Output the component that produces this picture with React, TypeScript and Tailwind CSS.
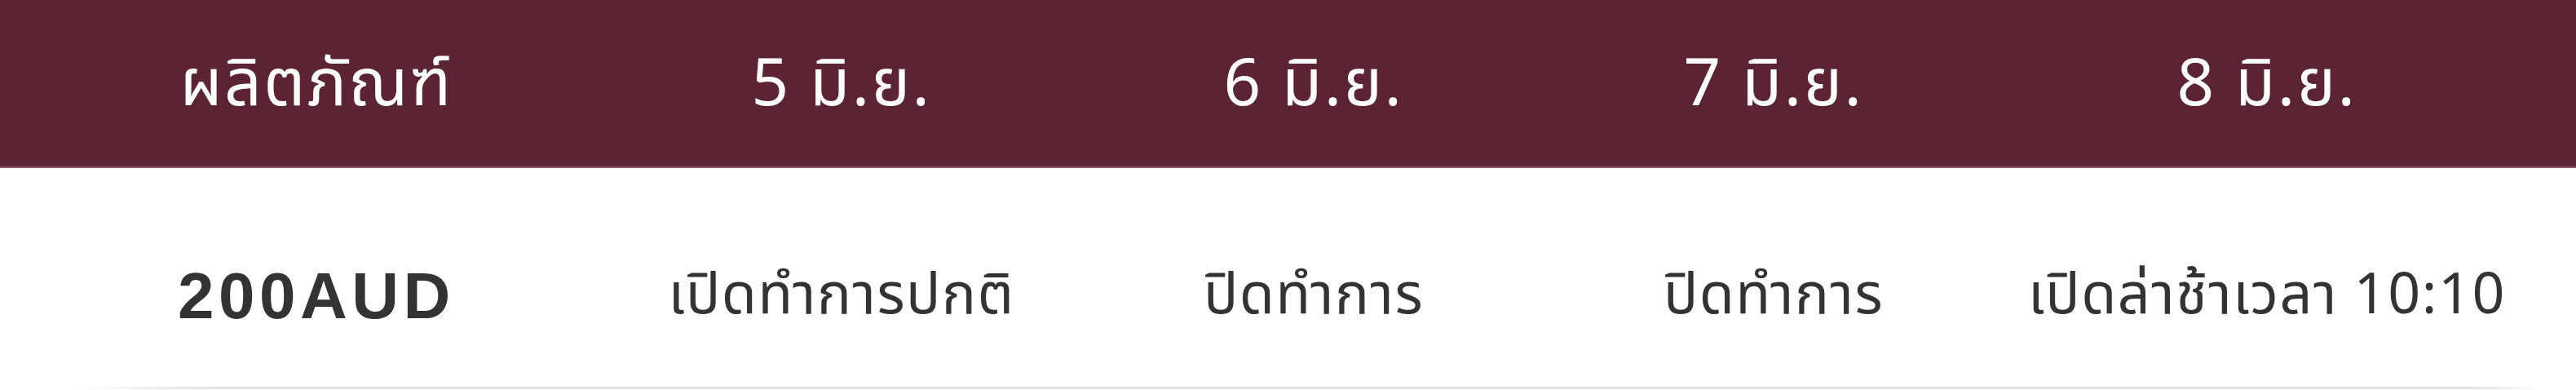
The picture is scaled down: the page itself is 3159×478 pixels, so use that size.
const days = ["5 มิ.ย.", "6 มิ.ย.", "7 มิ.ย.", "8 มิ.ย."];
const statuses = ["เปิดทำการปกติ", "ปิดทำการ", "ปิดทำการ", "เปิดล่าช้าเวลา 10:10"];

const cols = "grid grid-cols-[776px_512px_646px_482px_728px]";

export default function App() {
  return (
    <div className="w-[3159px] bg-white font-['Noto_Sans_Thai','Noto_Sans',sans-serif] font-stretch-condensed">
      <div className={`${cols} h-[206px] bg-[#5c2333] border-b-2 border-[#8a5868] text-white text-[80px] tracking-[2.5px] pt-[6px]`}>
        <div className="flex items-center justify-center">ผลิตภัณฑ์</div>
        {days.map((d, i) => (
          <div key={i} className="flex items-center justify-center">
            {d}
          </div>
        ))}
      </div>
      <div className={`${cols} h-[268px] text-[#333333] text-[70px] tracking-[1.5px] pt-[46px]`}>
        <div className="flex items-center justify-center font-['Liberation_Sans',sans-serif] font-bold text-[80px] tracking-[5.5px]">
          200AUD
        </div>
        {statuses.map((s, i) => (
          <div key={i} className="flex items-center justify-center whitespace-nowrap">
            {s}
          </div>
        ))}
      </div>
      <div className="h-[3px] bg-[linear-gradient(to_right,transparent_2.8%,#e3e3e3_8%,#e3e3e3_96%,transparent_98.7%)]" />
      <div className="h-[1px]" />
    </div>
  );
}
